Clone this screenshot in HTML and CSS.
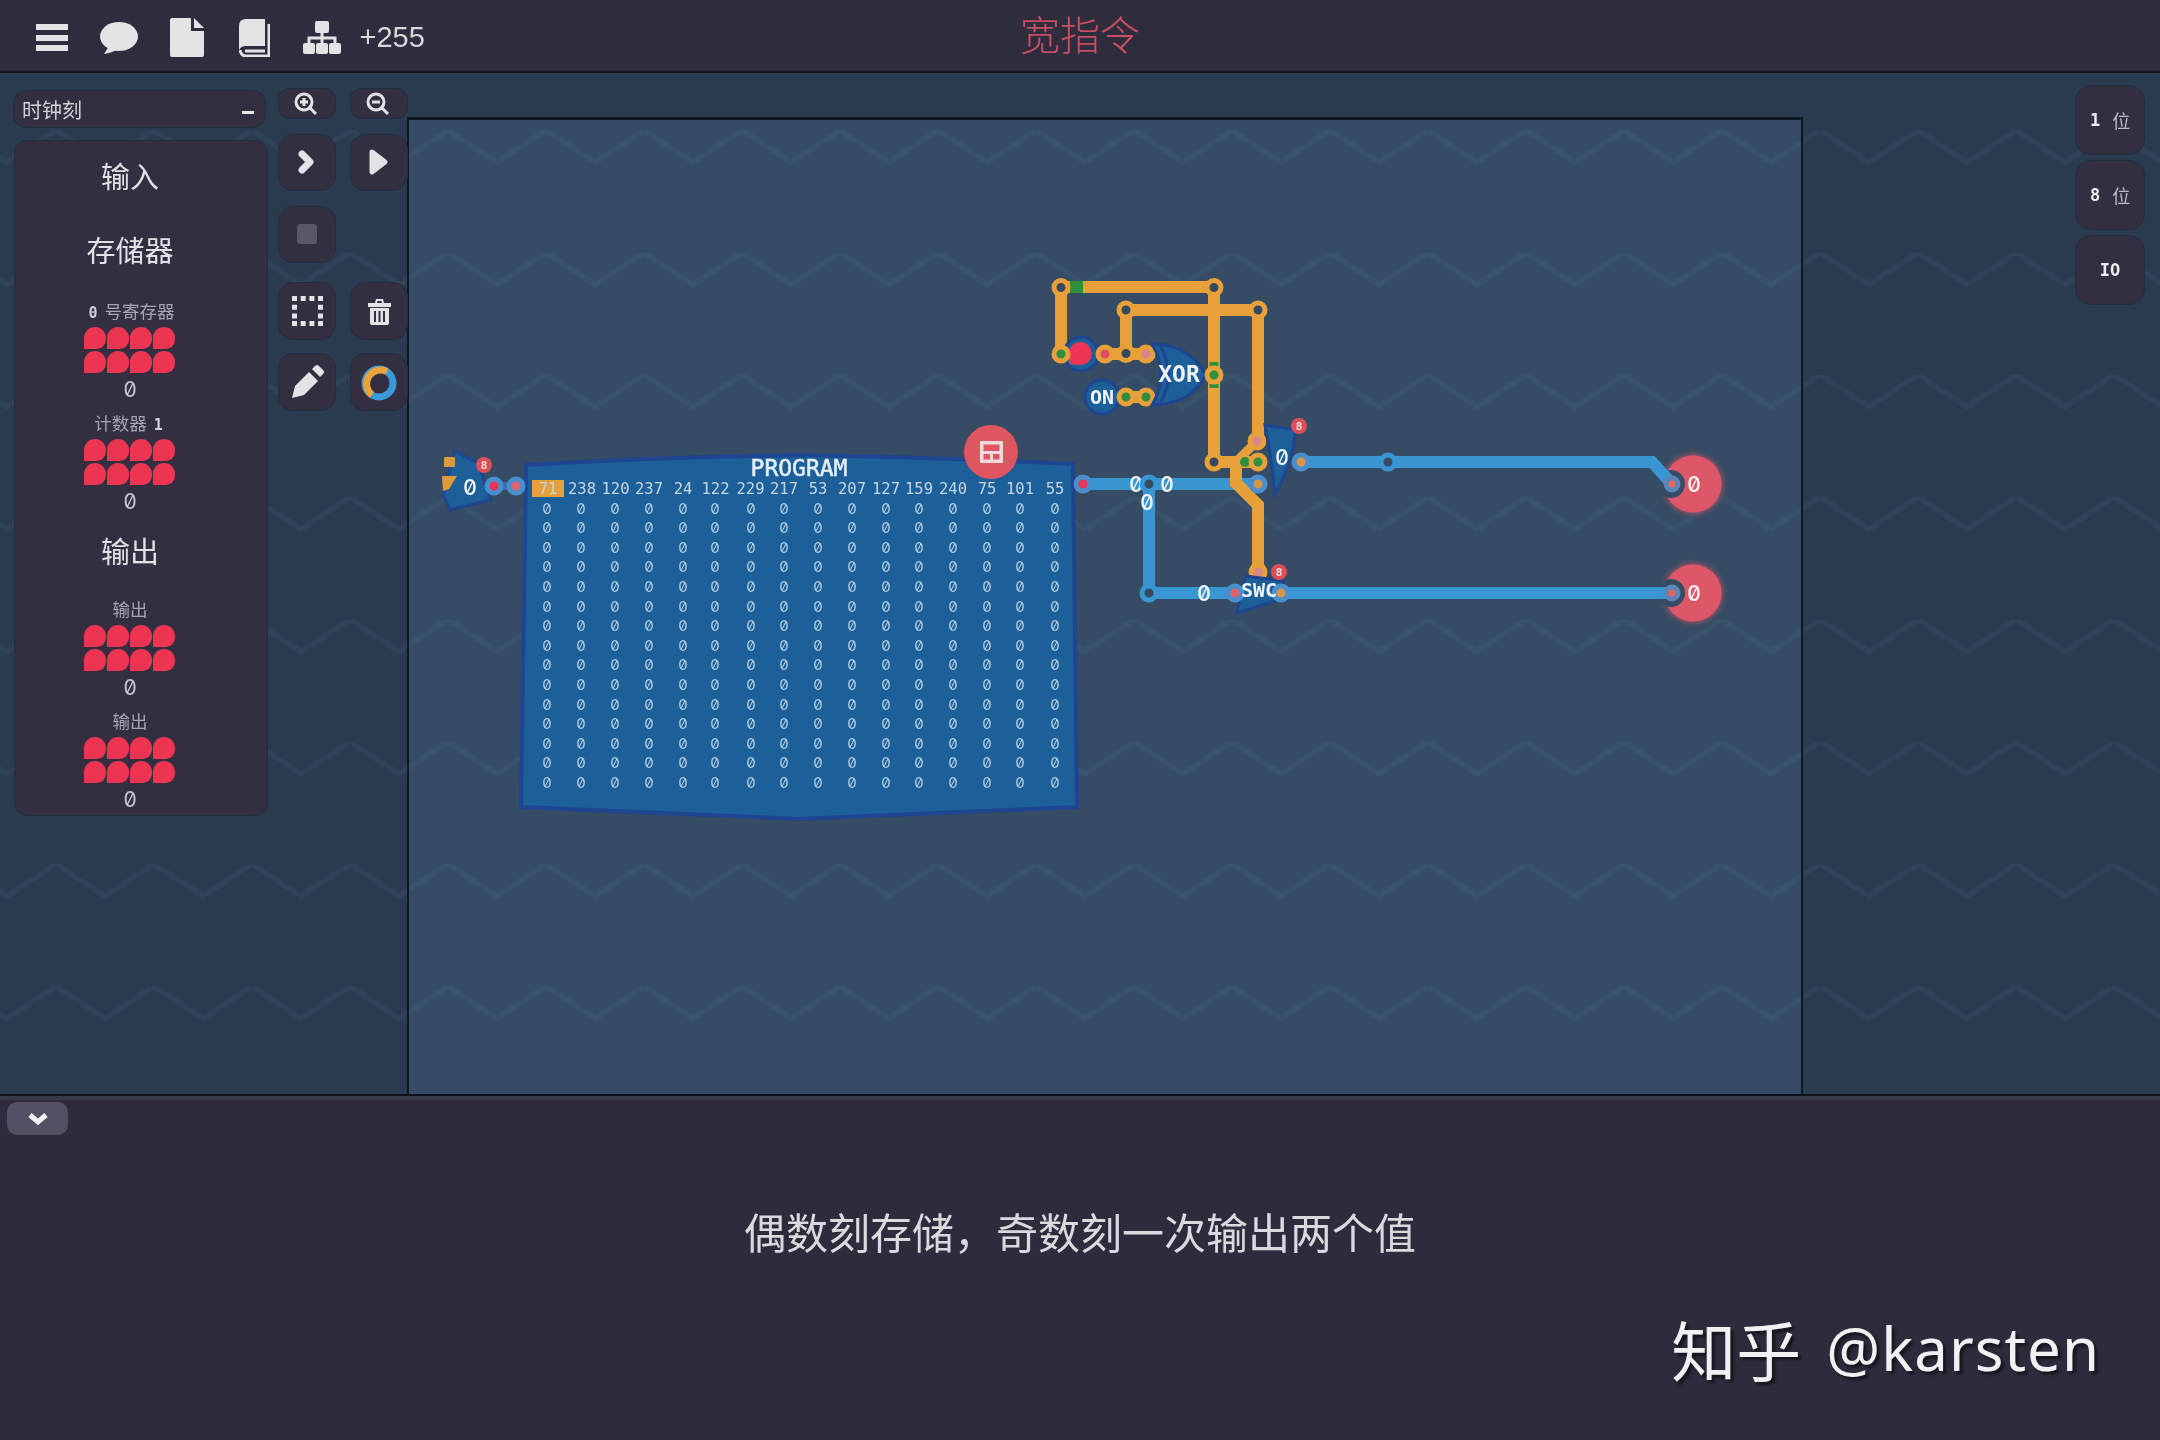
FILE: index.html
```html
<!DOCTYPE html>
<html lang="zh">
<head>
<meta charset="utf-8">
<title>宽指令</title>
<link rel="stylesheet" href="styles.css">
</head>
<body>
<header class="topbar">
  <nav class="top-tools">
    <span class="slot"><svg class="ico" width="32" height="27" viewBox="36 24 32 27"><rect x="36" y="24" width="32" height="6"/><rect x="36" y="35" width="32" height="6"/><rect x="36" y="45" width="32" height="6"/></svg></span>
    <span class="slot"><svg class="ico" width="38" height="32" viewBox="101 21 38 32"><ellipse cx="120" cy="35.500" rx="19" ry="14.500"/><path d="M110 45L105 53Q113 52 119 48Z"/></svg></span>
    <span class="slot"><svg class="ico" width="34" height="39" viewBox="171 18 34 39"><path d="M171 20Q171 18 173 18H192V31H205V55Q205 57 203 57H173Q171 57 171 55Z"/><path d="M195 18L205 28H195Z"/></svg></span>
    <span class="slot"><svg class="ico" width="31" height="38" viewBox="240 18 31 38"><path d="M247 18H266V45H247Q242 45 240 49V25Q240 18 247 18Z"/><path class="ico-line" d="M241 49Q242 55 247 55H270V23"/><path class="ico-line" d="M246 50H266"/></svg></span>
    <span class="slot"><svg class="ico" width="38" height="33" viewBox="303 21 38 33"><rect x="315" y="21" width="14" height="12" rx="2"/><rect x="303" y="43" width="12" height="11" rx="2"/><rect x="316" y="43" width="12" height="11" rx="2"/><rect x="329" y="43" width="12" height="11" rx="2"/><path class="ico-line" d="M322 33V43M309 43V38H335V43"/></svg></span>
    <span class="credits">+255</span>
  </nav>
  <h1 class="title">宽指令</h1>
</header>

<main class="workspace">
  <svg class="zigzag" width="2160" height="1021" viewBox="0 73 2160 1021">
    <defs><pattern id="wave-side" x="56" y="8" width="98" height="122.300" patternUnits="userSpaceOnUse"><path d="M-49 32L0 0L49 32L98 0L147 32" class="wave-line wave-side"/></pattern></defs>
    <rect x="0" y="73" width="2160" height="1021" fill="url(#wave-side)"/>
  </svg>

  <aside class="sidebar">
    <div class="clock-select"><span>时钟刻</span><i class="minus"></i></div>
    <section class="parts">
      <h2 class="parts-head">输入</h2>
      <h2 class="parts-head">存储器</h2>
      <div class="part">
        <div class="part-label"><b>0</b> 号寄存器</div>
        <div class="bits"><i></i><i></i><i></i><i></i><i></i><i></i><i></i><i></i></div>
        <div class="part-value">0</div>
      </div>
      <div class="part">
        <div class="part-label">计数器 <b>1</b></div>
        <div class="bits"><i></i><i></i><i></i><i></i><i></i><i></i><i></i><i></i></div>
        <div class="part-value">0</div>
      </div>
      <h2 class="parts-head parts-head-out">输出</h2>
      <div class="part">
        <div class="part-label">输出</div>
        <div class="bits"><i></i><i></i><i></i><i></i><i></i><i></i><i></i><i></i></div>
        <div class="part-value">0</div>
      </div>
      <div class="part">
        <div class="part-label">输出</div>
        <div class="bits"><i></i><i></i><i></i><i></i><i></i><i></i><i></i><i></i></div>
        <div class="part-value">0</div>
      </div>
    </section>
  </aside>

  <div class="tools">
    <div class="tool-row">
      <button class="tool tool-short"><svg class="ico" width="58" height="31" viewBox="278 89 58 31"><circle class="ico-line" cx="304" cy="103" r="8"/><path class="ico-line" d="M310 109L316 115M300 103H308M304 99V107"/></svg></button>
      <button class="tool tool-short"><svg class="ico" width="58" height="31" viewBox="350 89 58 31"><circle class="ico-line" cx="376" cy="103" r="8"/><path class="ico-line" d="M382 109L388 115M372 103H380"/></svg></button>
    </div>
    <div class="tool-row row-step">
      <button class="tool"><svg class="ico" width="58" height="57" viewBox="278 135 58 57"><path class="ico-chev" d="M302 155L310 163L302 171"/></svg></button>
      <button class="tool"><svg class="ico" width="58" height="57" viewBox="350 135 58 57"><path class="ico-play" d="M372 153L385 163L372 173Z"/></svg></button>
    </div>
    <div class="tool-row row-step">
      <button class="tool"><svg width="58" height="57" viewBox="278 207 58 57"><rect class="ico-stop" x="297" y="225" width="20" height="20" rx="3"/></svg></button>
    </div>
    <div class="tool-row row-wide">
      <button class="tool tool-tall"><svg class="ico" width="58" height="58" viewBox="278 283 58 58"><path class="ico-dots" d="M292 299.500H323M292 324.500H323M294.500 297V327M320.500 297V327"/></svg></button>
      <button class="tool tool-tall"><svg class="ico" width="58" height="58" viewBox="350 283 58 58"><path d="M368 304H391V308H368ZM375 304L376 300H383L384 304H382L381.500 302H377.500L377 304Z"/><path d="M370 309H389V324Q389 326 387 326H372Q370 326 370 324Z"/><path class="ico-slit" d="M375 312V323M379.500 312V323M384 312V323"/></svg></button>
    </div>
    <div class="tool-row">
      <button class="tool tool-tall"><svg class="ico" width="58" height="58" viewBox="278 353 58 58"><path d="M292 398L295 386L309 372L318 381L304 395Z"/><path d="M312 369L315 366Q317 364 319 366L323 370Q325 372 323 374L320 377Z"/></svg></button>
      <button class="tool tool-tall"><svg width="58" height="58" viewBox="350 353 58 58"><circle class="ring-blue" cx="379" cy="383" r="14"/><path class="ring-orange" d="M372 395A14 14 0 0 1 387 371.500"/></svg></button>
    </div>
  </div>

  <div class="board">
    <svg class="circuit" width="1392" height="975" viewBox="409 120 1392 975">
      <defs><pattern id="wave-board" x="56" y="8" width="98" height="122.300" patternUnits="userSpaceOnUse"><path d="M-49 32L0 0L49 32L98 0L147 32" class="wave-line wave-board"/></pattern></defs>
      <rect x="409" y="120" width="1392" height="975" fill="url(#wave-board)"/>

      <!-- output circles -->
      <g class="out-glow"><circle class="out" cx="1693" cy="484" r="28.500"/><circle class="out" cx="1693" cy="593" r="28.500"/></g>
      <circle class="notch" cx="1671" cy="484" r="14"/><circle class="notch" cx="1671" cy="593" r="14"/>

      <!-- blue wires -->
      <path class="wire blue" d="M1301 462H1652L1672 484"/>
      <path class="wire blue" d="M1083 484H1258"/>
      <path class="wire blue" d="M1149 484V593H1672"/>
      <path class="wire-thin" d="M494 486H516"/>

      <!-- orange wires -->
      <path class="wire orange" d="M1061 354V287H1214V462"/>
      <path class="wire orange" d="M1126 354V310H1258V440"/>
      <path class="wire orange" d="M1061 354H1146"/>
      <path class="wire orange" d="M1126 397H1146"/>
      <path class="wire orange" d="M1214 462H1258"/>
      <path class="wire orange thin" d="M1236 462L1257 441"/>
      <path class="wire orange" d="M1236 462V483L1258 505V572"/>
      <path class="wire green" d="M1070 287H1083"/>
      <path class="wire green thin" d="M1214 362V366M1214 384V388"/>

      <!-- memory block -->
      <path class="chip chip-big" d="M526 465Q660 457 800 455Q930 457 1073 464L1077 807Q930 813 799 819Q660 813 521 807Z"/>
      <text class="chip-name" x="799" y="468">PROGRAM</text>
      <rect class="cursor" x="532" y="480" width="32" height="17"/>
      <text class="mem-head"><tspan x="548" y="489">71</tspan><tspan x="582" y="489">238</tspan><tspan x="615.500" y="489">120</tspan><tspan x="649" y="489">237</tspan><tspan x="683" y="489">24</tspan><tspan x="715.500" y="489">122</tspan><tspan x="750.500" y="489">229</tspan><tspan x="784" y="489">217</tspan><tspan x="818" y="489">53</tspan><tspan x="852" y="489">207</tspan><tspan x="886" y="489">127</tspan><tspan x="919" y="489">159</tspan><tspan x="953" y="489">240</tspan><tspan x="987" y="489">75</tspan><tspan x="1020" y="489">101</tspan><tspan x="1055" y="489">55</tspan></text>
      <g class="mem-cells">
        <text y="508" x="547 581 615 649 683 715 751 784 818 852 886 919 953 987 1020 1055">0000000000000000</text>
        <text y="527.600" x="547 581 615 649 683 715 751 784 818 852 886 919 953 987 1020 1055">0000000000000000</text>
        <text y="547.200" x="547 581 615 649 683 715 751 784 818 852 886 919 953 987 1020 1055">0000000000000000</text>
        <text y="566.800" x="547 581 615 649 683 715 751 784 818 852 886 919 953 987 1020 1055">0000000000000000</text>
        <text y="586.400" x="547 581 615 649 683 715 751 784 818 852 886 919 953 987 1020 1055">0000000000000000</text>
        <text y="606" x="547 581 615 649 683 715 751 784 818 852 886 919 953 987 1020 1055">0000000000000000</text>
        <text y="625.600" x="547 581 615 649 683 715 751 784 818 852 886 919 953 987 1020 1055">0000000000000000</text>
        <text y="645.200" x="547 581 615 649 683 715 751 784 818 852 886 919 953 987 1020 1055">0000000000000000</text>
        <text y="664.800" x="547 581 615 649 683 715 751 784 818 852 886 919 953 987 1020 1055">0000000000000000</text>
        <text y="684.400" x="547 581 615 649 683 715 751 784 818 852 886 919 953 987 1020 1055">0000000000000000</text>
        <text y="704" x="547 581 615 649 683 715 751 784 818 852 886 919 953 987 1020 1055">0000000000000000</text>
        <text y="723.600" x="547 581 615 649 683 715 751 784 818 852 886 919 953 987 1020 1055">0000000000000000</text>
        <text y="743.200" x="547 581 615 649 683 715 751 784 818 852 886 919 953 987 1020 1055">0000000000000000</text>
        <text y="762.800" x="547 581 615 649 683 715 751 784 818 852 886 919 953 987 1020 1055">0000000000000000</text>
        <text y="782.400" x="547 581 615 649 683 715 751 784 818 852 886 919 953 987 1020 1055">0000000000000000</text>
      </g>
      <circle class="save" cx="991" cy="452" r="27"/>
      <path class="save-ico" d="M980 441H1003V463H980ZM983.500 444.500V451H999.500V444.500ZM983.500 454V459.500H990V454ZM993 454V459.500H999.500V454Z"/>

      <!-- program counter register -->
      <path class="chip" d="M455 451L478 463L491 500L450 510L443 494Z"/>
      <rect class="tab" x="444" y="457" width="11" height="10" rx="1"/>
      <path class="tab" d="M442 476H457L449 489L443 491Z"/>
      <text class="val" x="470" y="487">0</text>
      <circle class="badge" cx="484" cy="465" r="8"/><text class="badge-t" x="484" y="465">8</text>
      <circle class="pin pin-blue" cx="494" cy="486" r="7"/>
      <circle class="pin pin-blue pin-pink" cx="516" cy="486" r="7"/>
      <circle class="pin pin-blue" cx="1083" cy="484" r="7"/>

      <!-- input + ON -->
      <circle class="chip" cx="1081" cy="354" r="17"/>
      <path class="led" d="M1069 364V352A11.500 11.500 0 1 1 1081 365Z"/>
      <circle class="chip" cx="1102" cy="397" r="17"/>
      <text class="gate-t small" x="1102" y="397">ON</text>

      <!-- xor -->
      <circle class="pin pin-o pin-soft" cx="1146" cy="354" r="7"/>
      <circle class="pin pin-o pin-g" cx="1146" cy="397" r="7"/>
      <path class="chip" d="M1152 344C1180 344 1197 358 1206 375C1197 392 1180 405 1152 405C1164 385 1164 364 1152 344Z"/>
      <path class="chip-back" d="M1160 345C1171 365 1171 385 1160 404"/>
      <text class="gate-t" x="1179" y="374">XOR</text>
      <circle class="pin pin-o pin-g" cx="1214" cy="375" r="7"/>

      <circle class="pin pin-o" cx="1061" cy="287.500" r="7"/>
      <circle class="pin pin-o" cx="1214" cy="287.500" r="7"/>
      <circle class="pin pin-o" cx="1126" cy="310" r="7"/>
      <circle class="pin pin-o" cx="1258" cy="310" r="7"/>
      <circle class="pin pin-o pin-g" cx="1061" cy="354" r="7"/>
      <circle class="pin pin-o pin-r" cx="1105" cy="354" r="7"/>
      <circle class="pin pin-o" cx="1126" cy="353.500" r="7"/>
      <circle class="pin pin-o pin-g" cx="1126" cy="397" r="7"/>
      <circle class="pin pin-o" cx="1214" cy="462" r="7"/>
      <circle class="dot-g" cx="1245" cy="462" r="5"/>

      <!-- upper switch -->
      <circle class="pin pin-o pin-soft" cx="1257" cy="441" r="7"/>
      <circle class="pin pin-o pin-g" cx="1258" cy="462" r="7"/>
      <circle class="pin pin-blue pin-amber" cx="1258" cy="484" r="7"/>
      <path class="chip" d="M1265 425L1296 430Q1292 465 1275 495Q1272 460 1265 425Z"/>
      <text class="val" x="1282" y="457">0</text>
      <circle class="badge" cx="1299" cy="426" r="8"/><text class="badge-t" x="1299" y="426">8</text>
      <circle class="pin pin-blue pin-amber" cx="1301" cy="462" r="7"/>
      <circle class="pin pin-blue pin-hole" cx="1388" cy="462" r="7"/>

      <!-- values on the bus -->
      <text class="val" x="1136" y="484">0</text>
      <text class="val" x="1167" y="484">0</text>
      <text class="val" x="1147" y="502">0</text>
      <circle class="pin pin-blue pin-hole" cx="1149" cy="484" r="7"/>
      <circle class="pin pin-blue pin-hole" cx="1149" cy="593" r="7"/>
      <text class="val" x="1204" y="593">0</text>

      <!-- lower switch -->
      <circle class="pin pin-o pin-soft" cx="1258" cy="572" r="7"/>
      <path class="chip" d="M1246 576L1284 581L1275 601L1237 613L1241 592Z"/>
      <circle class="pin pin-blue pin-pink" cx="1235" cy="593" r="7"/>
      <circle class="pin pin-blue pin-amber" cx="1281" cy="593" r="7"/>
      <text class="gate-t small" x="1259" y="590">SWC</text>
      <circle class="badge" cx="1279" cy="572" r="8"/><text class="badge-t" x="1279" y="572">8</text>

      <!-- outputs -->
      <circle class="pin pin-out" cx="1672" cy="484" r="6"/>
      <circle class="pin pin-out" cx="1672" cy="593" r="6"/>
      <text class="val" x="1694" y="484">0</text>
      <text class="val" x="1694" y="593">0</text>
    </svg>
  </div>

  <div class="widths">
    <button class="width-btn"><b>1</b><span>位</span></button>
    <button class="width-btn"><b>8</b><span>位</span></button>
    <button class="width-btn"><b>IO</b></button>
  </div>
</main>

<footer class="story">
  <button class="collapse"><svg width="24" height="16" viewBox="0 0 24 16"><path class="collapse-ico" d="M4 4L12 11L20 4"/></svg></button>
  <p class="caption">偶数刻存储，奇数刻一次输出两个值</p>
  <div class="watermark"><span class="wm-zh">知乎</span><span class="wm-name">@karsten</span></div>
</footer>
</body>
</html>
```
FILE: styles.css
```css
* { box-sizing: border-box; }
html, body { margin: 0; padding: 0; }
body {
  width: 2160px;
  height: 1440px;
  overflow: hidden;
  display: flex;
  flex-direction: column;
  background: #2f2b3d;
  font-family: "Noto Sans CJK SC", "Liberation Sans", sans-serif;
  filter: blur(0.5px);
}

/* top bar */
.topbar {
  height: 73px;
  flex: none;
  display: grid;
  grid-template-columns: 1fr auto 1fr;
  align-items: center;
  background: #2f2c3e;
  border-bottom: 2px solid #11131b;
}
.top-tools { display: flex; align-items: center; padding: 4px 0 0 18px; grid-column: 1; }
.slot { width: 67.5px; display: flex; justify-content: center; }
.credits { font: 29px "Liberation Sans", sans-serif; color: #d8d8da; margin-left: 4px; }
.title {
  margin: 0 0 6px;
  grid-column: 2;
  font-size: 40px;
  font-weight: 300;
  line-height: 60px;
  color: #cb4f63;
}
.ico { fill: #e3e3e5; display: block; }
.ico-line { fill: none; stroke: #e3e3e5; stroke-width: 3; }
.ico-chev { fill: none; stroke: #e3e3e5; stroke-width: 7; stroke-linecap: round; stroke-linejoin: round; }
.ico-play { stroke: #e3e3e5; stroke-width: 5; stroke-linejoin: round; }
.ico-stop { fill: #5a5868; }
.ico-dots { fill: none; stroke: #e3e3e5; stroke-width: 5; stroke-dasharray: 5 3.700; }
.ico-slit { fill: none; stroke: #332f41; stroke-width: 2; }
.ring-blue { fill: none; stroke: #3a9ad9; stroke-width: 7; }
.ring-orange { fill: none; stroke: #e8a33d; stroke-width: 7; }

/* workspace */
.workspace {
  position: relative;
  flex: none;
  height: 1023px;
  display: flex;
  padding-left: 13px;
  background: #2b3b4f;
  border-bottom: 2px solid #0e131b;
}
.zigzag { position: absolute; left: 0; top: 0; }
.wave-line { fill: none; stroke-width: 5; }
.wave-side { stroke: #2f4258; }
.wave-board { stroke: #3a526b; }

.sidebar { position: relative; width: 255px; padding-top: 17px; flex: none; }
.clock-select {
  height: 38px;
  width: 253px;
  padding: 0 11px 0 8px;
  display: flex;
  align-items: center;
  justify-content: space-between;
  background: #332f41;
  border: 1px solid #212d40;
  border-radius: 13px;
  font-size: 20px;
  color: #d4d4d8;
}
.minus { width: 12px; height: 3px; background: #e8e8ea; margin-top: 6px; }
.parts {
  margin: 12px 0 0 1px;
  width: 254px;
  height: 676px;
  padding-right: 22px;
  background: #332f41;
  border: 1px solid #212d40;
  border-radius: 13px;
  color: #d8d8dc;
}
.parts-head {
  margin: 0;
  height: 74px;
  font-size: 29px;
  font-weight: 400;
  line-height: 68px;
  text-align: center;
  color: #e2e2e6;
}
.parts-head + .part { margin-top: 8px; }
.parts-head-out { margin: -5px 0 -3px; }
.parts-head-out + .part { margin-top: 0; padding-top: 8px; height: 120px; }
.part { height: 112px; }
.part-label {
  height: 28px;
  font-size: 17.500px;
  line-height: 28px;
  text-align: center;
  color: #a6a6ae;
}
.part-label b { font: bold 15px "DejaVu Sans Mono", monospace; color: #d2d2d6; margin: 0 3px; }
.bits {
  width: 91px;
  margin: 2px auto 0 auto;
  display: grid;
  grid-template-columns: repeat(4, 22px);
  grid-auto-rows: 22px;
  gap: 2px 1px;
  transform: translateX(-1px);
}
.bits i { background: #ec3551; border-radius: 50% 50% 42% 0; }
.part-value {
  height: 30px;
  font: 21px/33px "Inter", sans-serif;
  font-variant-numeric: slashed-zero;
  text-align: center;
  color: #c6c6cc;
}

.tools {
  position: relative;
  z-index: 1;
  width: 129px;
  margin-left: 10px;
  padding-top: 15px;
  display: flex;
  flex-direction: column;
  flex: none;
  gap: 15px;
}
.tool-row { display: flex; gap: 14px; }
.row-wide { margin-top: 4px; margin-bottom: -2px; }
.tool {
  width: 58px;
  height: 57px;
  padding: 0;
  flex: none;
  background: #332f41;
  border: 1px solid #212d40;
  border-radius: 15px;
  display: block;
}
.tool svg { position: relative; margin: -1px; display: block; }
.tool-short { height: 31px; border-radius: 11px; }
.tool-tall { height: 58px; }

/* board */
.board {
  position: relative;
  flex: none;
  width: 1396px;
  height: 977px;
  margin-top: 44px;
  background: #364c64;
  border: solid #0c1722;
  border-width: 3px 2px 0 2px;
}
.circuit { display: block; }
.out-glow { filter: drop-shadow(0 0 3px #e0566a); }
.out { fill: #dd5769; }
.notch { fill: #364c64; }
.wire { fill: none; stroke-width: 12; }
.wire.thin { stroke-width: 9; }
.blue { stroke: #3a96d2; }
.orange { stroke: #e8a13a; }
.green { stroke: #2f8f3f; }
.wire-thin { stroke: #3a6fb0; stroke-width: 8; fill: none; }
.chip { fill: #1c5f99; stroke: #1f4490; stroke-width: 3; }
.chip-big { stroke-width: 4; }
.chip-back { fill: none; stroke: #1f4490; stroke-width: 3; }
.tab { fill: #df9a3c; }
.cursor { fill: #e8a13a; }
.chip-name, .gate-t, .val, .badge-t, .mem-head, .mem-cells text {
  text-anchor: middle;
  dominant-baseline: central;
  font-family: "DejaVu Sans Mono", monospace;
}
.chip-name { font-size: 23px; fill: #e4eef4; stroke: #e4eef4; stroke-width: 0.5px; }
.mem-head { font-size: 15.500px; fill: #c5d6e4; }
.mem-cells text { font-family: "Inter", sans-serif; font-variant-numeric: slashed-zero; font-size: 15px; fill: #b4cfe2; }
.gate-t { font-size: 23px; font-weight: bold; fill: #f0f4f8; }
.gate-t.small { font-size: 20px; }
.val { font-family: "Inter", sans-serif; font-variant-numeric: slashed-zero; font-size: 21px; font-weight: 500; fill: #f4f6f8; }
.badge { fill: #dc4f58; }
.badge-t { font-size: 11px; font-weight: bold; fill: #f4dede; }
.save { fill: #df5560; }
.save-ico { fill: #f0d9da; fill-rule: evenodd; }
.led { fill: #ef3458; }
.pin { stroke-width: 5; fill: #35495f; }
.pin-o { stroke: #e8a13a; }
.pin-blue { stroke: #4a8fcd; fill: #ec3356; }
.pin-hole { stroke: #3a96d2; fill: #35495f; }
.pin-pink { fill: #e0636f; }
.pin-amber { fill: #d7964a; }
.pin-g { fill: #2f8f3f; }
.pin-r { fill: #e24c62; }
.pin-soft { fill: #d8878a; }
.pin-out { stroke: #5c86b8; fill: #e8645f; }
.dot-g { fill: #2f8f3f; }

/* width buttons */
.widths {
  position: relative;
  margin-left: auto;
  margin-right: 15px;
  padding-top: 12px;
  display: flex;
  flex-direction: column;
  gap: 5px;
}
.width-btn {
  width: 70px;
  height: 70px;
  padding: 0;
  display: flex;
  align-items: center;
  justify-content: center;
  gap: 12px;
  background: #332f41;
  border: 1px solid #212d40;
  border-radius: 16px;
  color: #bdbdc4;
  font-family: "Noto Sans CJK SC", sans-serif;
  font-size: 18px;
}
.width-btn b { font: bold 17px "DejaVu Sans Mono", monospace; color: #ecedf0; }

/* footer */
.story {
  position: relative;
  flex: 1;
  padding-top: 2px;
  background: #2f2b3d;
  border-top: 4px solid #393949;
}
.collapse {
  margin-left: 7px;
  width: 61px;
  height: 33px;
  padding: 0;
  display: flex;
  align-items: center;
  justify-content: center;
  background: #544f62;
  border: 0;
  border-radius: 10px;
}
.collapse-ico { fill: none; stroke: #f0f0f2; stroke-width: 5; }
.caption {
  margin: 66px 0 0;
  font-size: 42px;
  line-height: 60px;
  text-align: center;
  color: #dadade;
}
.watermark {
  position: absolute;
  right: 60px;
  top: 203px;
  display: flex;
  align-items: center;
  gap: 25px;
  color: #f1f1f3;
  text-shadow: 3px 3px 3px rgba(0, 0, 0, 0.55);
}
.wm-zh { font-size: 65px; line-height: 90px; font-weight: 400; }
.wm-name { font: 400 60px/90px "Noto Sans", sans-serif; letter-spacing: 1px; }
```
